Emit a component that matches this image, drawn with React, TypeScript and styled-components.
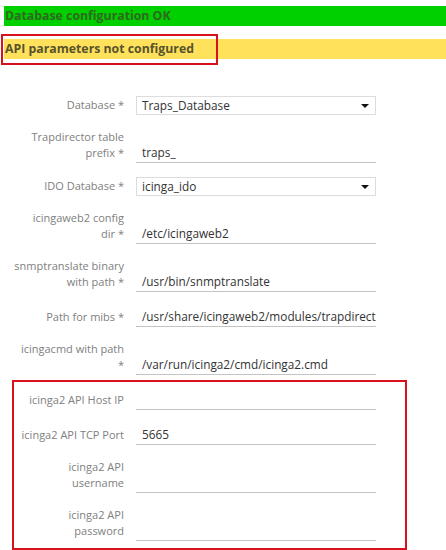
import styled, { createGlobalStyle } from "styled-components";

const GlobalStyle = createGlobalStyle`
  body {
    margin: 0;
    background: #ffffff;
    font-family: "Open Sans", "Noto Sans", Arial, sans-serif;
  }
`;

const Page = styled.div`
  width: 446px;
  height: 550px;
  overflow: hidden;
  padding: 6px 0 0 4px;
  box-sizing: border-box;
  position: relative;
`;

const Banner = styled.div<{ $tone: "ok" | "warn" }>`
  height: 20px;
  line-height: 20px;
  padding-left: 1px;
  font-size: 12.3px;
  font-weight: 700;
  white-space: nowrap;
  background: ${(p) => (p.$tone === "ok" ? "#00d000" : "#ffe15c")};
  color: ${(p) => (p.$tone === "ok" ? "#2e6a1e" : "#57532c")};
  margin-bottom: 13px;
`;

// red annotation frame drawn over the content
const Highlight = styled.div<{
  $top: number;
  $left: number;
  $width: number;
  $height: number;
}>`
  position: absolute;
  top: ${(p) => p.$top}px;
  left: ${(p) => p.$left}px;
  width: ${(p) => p.$width}px;
  height: ${(p) => p.$height}px;
  border: 2px solid #d8121c;
  box-sizing: border-box;
  pointer-events: none;
`;

const Form = styled.div`
  margin: 37px 0 0 -4px;
  display: flex;
  flex-direction: column;
  gap: 14px;
`;

const Group = styled.div`
  position: relative;
  display: flex;
  flex-direction: column;
  gap: 14px;
`;

const Row = styled.div`
  display: grid;
  grid-template-columns: 124px 240px;
  column-gap: 12px;
  align-items: end;
`;

const Label = styled.div`
  text-align: right;
  font-size: 11px;
  line-height: 16px;
  color: #808080;
  padding-bottom: 2px;
`;

const Input = styled.div`
  height: 21px;
  line-height: 20px;
  box-sizing: border-box;
  border-bottom: 1px solid #c4c4c4;
  padding-left: 6px;
  font-size: 11.8px;
  color: #333333;
  white-space: nowrap;
  overflow: hidden;
`;

const Select = styled.div`
  height: 19px;
  line-height: 17px;
  box-sizing: border-box;
  border: 1px solid #dcdcdc;
  background: #ffffff;
  padding-left: 5px;
  font-size: 11.8px;
  color: #333333;
  display: flex;
  justify-content: space-between;
  align-items: center;
`;

const Caret = styled.span`
  width: 0;
  height: 0;
  margin-right: 6px;
  border-left: 4px solid transparent;
  border-right: 4px solid transparent;
  border-top: 4px solid #111111;
`;

type Field = { label: string[]; value?: string; select?: boolean };

const mainFields: Field[] = [
  { label: ["Database *"], value: "Traps_Database", select: true },
  { label: ["Trapdirector table", "prefix *"], value: "traps_" },
  { label: ["IDO Database *"], value: "icinga_ido", select: true },
  { label: ["icingaweb2 config", "dir *"], value: "/etc/icingaweb2" },
  {
    label: ["snmptranslate binary", "with path *"],
    value: "/usr/bin/snmptranslate",
  },
  {
    label: ["Path for mibs *"],
    value: "/usr/share/icingaweb2/modules/trapdirector/mibs",
  },
  {
    label: ["icingacmd with path", "*"],
    value: "/var/run/icinga2/cmd/icinga2.cmd",
  },
];

const apiFields: Field[] = [
  { label: ["icinga2 API Host IP"] },
  { label: ["icinga2 API TCP Port"], value: "5665" },
  { label: ["icinga2 API", "username"] },
  { label: ["icinga2 API", "password"] },
];

const FieldRow = ({ field }: { field: Field }) => (
  <Row>
    <Label>
      {field.label.map((line, i) => (
        <div key={i}>{line}</div>
      ))}
    </Label>
    {field.select ? (
      <Select>
        <span>{field.value}</span>
        <Caret />
      </Select>
    ) : (
      <Input>{field.value}</Input>
    )}
  </Row>
);

export default function App() {
  return (
    <>
      <GlobalStyle />
      <Page>
        <Banner $tone="ok">Database configuration OK</Banner>
        <Banner $tone="warn">API parameters not configured</Banner>
        <Highlight $top={34} $left={1} $width={217} $height={31} />
        <Form>
          {mainFields.map((f, i) => (
            <FieldRow key={i} field={f} />
          ))}
          <Group>
            {apiFields.map((f, i) => (
              <FieldRow key={i} field={f} />
            ))}
            <Highlight $top={-9} $left={12} $width={395} $height={170} />
          </Group>
        </Form>
      </Page>
    </>
  );
}
